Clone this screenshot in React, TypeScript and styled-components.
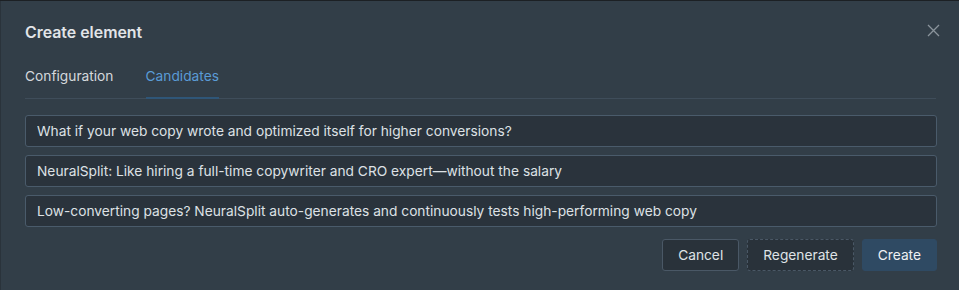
import styled, { createGlobalStyle } from 'styled-components';

const GlobalStyle = createGlobalStyle`
    html, body {
        margin: 0;
        padding: 0;
        background: #1c2024;
    }
    * {
        box-sizing: border-box;
    }
`;

const Dialog = styled.div`
    width: 959px;
    height: 290px;
    margin-top: 1px;
    background: #323e48;
    border-left: 1px solid #2a333b;
    padding: 0 22px 20px 24px;
    display: flex;
    flex-direction: column;
    font-family: Inter, "Noto Sans", sans-serif;
    color: #dde1e5;
`;

const Header = styled.div`
    display: flex;
    justify-content: space-between;
    align-items: flex-start;
    padding-top: 21px;
    margin-right: -4px;
`;

const Title = styled.h2`
    margin: 0;
    font-size: 15.9px;
    line-height: 22px;
    font-weight: 600;
    color: #e2e5e8;
`;

const CloseButton = styled.button`
    width: 16px;
    height: 16px;
    padding: 0;
    border: none;
    background: none;
    color: #8b949c;
    display: flex;
    align-items: center;
    justify-content: center;
    cursor: pointer;
`;

const TabList = styled.div`
    display: flex;
    gap: 32px;
    margin-top: 13px;
    margin-right: 1px;
    border-bottom: 1px solid #3f4d5a;
`;

const Tab = styled.button<{ $active?: boolean }>`
    padding: 10px 0 12px;
    margin-bottom: -1px;
    border: none;
    border-bottom: 2px solid ${p => (p.$active ? '#2f5678' : 'transparent')};
    background: none;
    font-family: inherit;
    font-size: 13.75px;
    line-height: 18px;
    color: ${p => (p.$active ? '#5a9bd6' : '#d4d8dc')};
    cursor: pointer;
`;

const Candidates = styled.div`
    display: flex;
    flex-direction: column;
    gap: 8px;
    margin-top: 16px;
`;

const CandidateInput = styled.input`
    height: 32px;
    width: 100%;
    padding: 0 11px;
    border: 1px solid #4a5b6b;
    border-radius: 3px;
    background: #2a333c;
    font-family: inherit;
    font-size: 13.75px;
    color: #dde1e5;
    outline: none;
`;

const Footer = styled.div`
    display: flex;
    justify-content: flex-end;
    gap: 8px;
    margin-top: 12px;
`;

const Button = styled.button<{ $variant?: 'default' | 'dashed' | 'primary' }>`
    height: 32px;
    padding: 0 15px;
    border-radius: 3px;
    font-family: inherit;
    font-size: 13.75px;
    color: #dfe3e6;
    cursor: pointer;
    border: 1px ${p => (p.$variant === 'dashed' ? 'dashed' : 'solid')}
        ${p => (p.$variant === 'primary' ? '#2f4a63' : '#4a5866')};
    background: ${p => (p.$variant === 'primary' ? '#2f4a63' : '#29323a')};
    ${p => p.$variant === 'primary' && 'color: #eef1f4;'}
`;

const candidates = [
    'What if your web copy wrote and optimized itself for higher conversions?',
    'NeuralSplit: Like hiring a full-time copywriter and CRO expert\u2014without the salary',
    'Low-converting pages? NeuralSplit auto-generates and continuously tests high-performing web copy',
];

function App() {
    return (
        <>
            <GlobalStyle />
            <Dialog>
                <Header>
                    <Title>Create element</Title>
                    <CloseButton aria-label="Close">
                        <svg width="13" height="13" viewBox="0 0 13 13" fill="none">
                            <path d="M1 1L12 12M12 1L1 12" stroke="currentColor" strokeWidth="1.3" />
                        </svg>
                    </CloseButton>
                </Header>
                <TabList>
                    <Tab>Configuration</Tab>
                    <Tab $active>Candidates</Tab>
                </TabList>
                <Candidates>
                    {candidates.map(text => (
                        <CandidateInput key={text} value={text} readOnly />
                    ))}
                </Candidates>
                <Footer>
                    <Button>Cancel</Button>
                    <Button $variant="dashed">Regenerate</Button>
                    <Button $variant="primary">Create</Button>
                </Footer>
            </Dialog>
        </>
    );
}

export default App;
